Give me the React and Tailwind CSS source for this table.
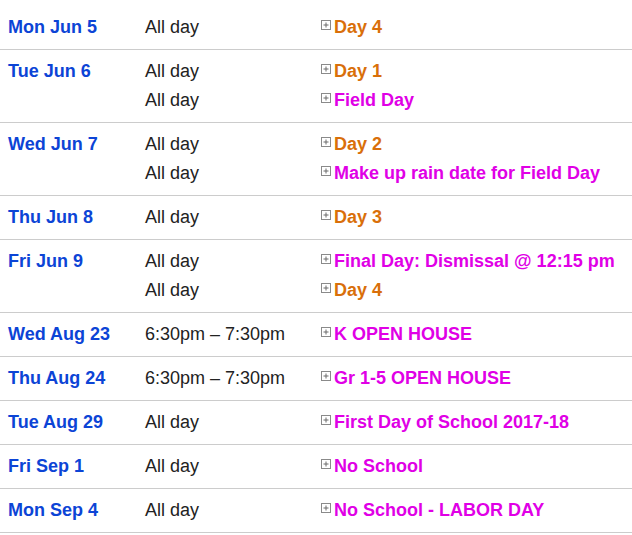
import React from "react";

const O = "text-[#d96f0a]";
const M = "text-[#e000e6]";

const rows = [
  { date: "Mon Jun 5", ev: [["All day", "Day 4", O]] },
  { date: "Tue Jun 6", ev: [["All day", "Day 1", O], ["All day", "Field Day", M]] },
  { date: "Wed Jun 7", ev: [["All day", "Day 2", O], ["All day", "Make up rain date for Field Day", M]] },
  { date: "Thu Jun 8", ev: [["All day", "Day 3", O]] },
  { date: "Fri Jun 9", ev: [["All day", "Final Day: Dismissal @ 12:15 pm", M], ["All day", "Day 4", O]] },
  { date: "Wed Aug 23", ev: [["6:30pm – 7:30pm", "K OPEN HOUSE", M]] },
  { date: "Thu Aug 24", ev: [["6:30pm – 7:30pm", "Gr 1-5 OPEN HOUSE", M]] },
  { date: "Tue Aug 29", ev: [["All day", "First Day of School 2017-18", M]] },
  { date: "Fri Sep 1", ev: [["All day", "No School", M]] },
  { date: "Mon Sep 4", ev: [["All day", "No School - LABOR DAY", M]] },
];

function PlusBox() {
  return (
    <svg width="10" height="10" viewBox="0 0 10 10" className="mt-[7px] shrink-0">
      <rect x="0.5" y="0.5" width="9" height="9" fill="white" stroke="#8a8a8a" strokeWidth="1" />
      <line x1="2.5" y1="5" x2="7.5" y2="5" stroke="#6a6a6a" strokeWidth="1" />
      <line x1="5" y1="2.5" x2="5" y2="7.5" stroke="#6a6a6a" strokeWidth="1" />
    </svg>
  );
}

export default function App() {
  return (
    <div
      className="w-[632px] h-[535px] bg-white pt-[6px] overflow-hidden"
      style={{ fontFamily: '"Liberation Sans", Arial, sans-serif' }}
    >
      {rows.map((r, i) => (
        <div
          key={i}
          className="flex pt-[7px] pb-[7px] border-b border-[#cccccc] text-[18px] leading-[29px]"
        >
          <div className="w-[145px] pl-[8px] font-bold text-[#0c44d6] shrink-0">{r.date}</div>
          <div className="flex flex-col">
            {r.ev.map((e, j) => (
              <div key={j} className="flex">
                <div className="w-[176px] text-[#222222] shrink-0">{e[0]}</div>
                <div className="flex gap-[3px]">
                  <PlusBox />
                  <span className={`font-bold ${e[2]}`}>{e[1]}</span>
                </div>
              </div>
            ))}
          </div>
        </div>
      ))}
    </div>
  );
}
